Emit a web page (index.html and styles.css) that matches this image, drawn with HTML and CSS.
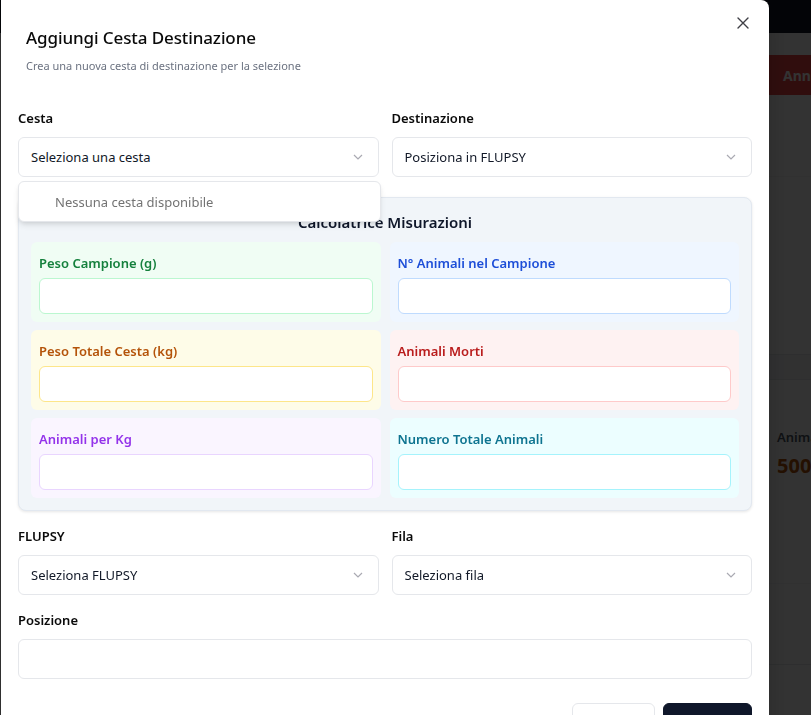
FILE: index.html
```html
<!DOCTYPE html>
<html lang="it">
<head>
<meta charset="utf-8">
<title>Aggiungi Cesta Destinazione</title>
<link rel="stylesheet" href="styles.css">
</head>
<body>
<div class="page">
  <header class="page-top"></header>
  <div class="page-col">
    <div class="toolbar"><span class="btn-danger">Annulla</span></div>
    <div class="blk blk-a"></div>
    <div class="blk blk-b"></div>
    <div class="blk blk-c"></div>
    <div class="stat">
      <div class="stat-label">Animali</div>
      <div class="stat-value">5000</div>
    </div>
    <div class="blk blk-d"></div>
    <div class="blk blk-e"></div>
  </div>
</div>
<div class="overlay"></div>

<div class="dialog" role="dialog">
  <button class="close" aria-label="Chiudi">
    <svg width="12" height="12" viewBox="0 0 12 12"><path d="M1 1L11 11M11 1L1 11" stroke="#3f3f46" stroke-width="1.4" stroke-linecap="round"/></svg>
  </button>
  <div class="dlg-head">
    <h2 class="dlg-title">Aggiungi Cesta Destinazione</h2>
    <p class="dlg-sub">Crea una nuova cesta di destinazione per la selezione</p>
  </div>

  <div class="two">
    <div class="field">
      <label class="lbl">Cesta</label>
      <div class="select-wrap">
        <div class="select"><span>Seleziona una cesta</span><svg class="chev" width="10" height="6" viewBox="0 0 10 6"><path d="M1 1l4 4 4-4" fill="none" stroke="#a1a1aa" stroke-width="1.2"/></svg></div>
        <div class="menu">Nessuna cesta disponibile</div>
      </div>
    </div>
    <div class="field">
      <label class="lbl">Destinazione</label>
      <div class="select"><span>Posiziona in FLUPSY</span><svg class="chev" width="10" height="6" viewBox="0 0 10 6"><path d="M1 1l4 4 4-4" fill="none" stroke="#a1a1aa" stroke-width="1.2"/></svg></div>
    </div>
  </div>

  <section class="calc">
    <h3 class="calc-title">Calcolatrice Misurazioni</h3>
    <div class="calc-grid">
      <div class="cell green"><div class="cell-lbl">Peso Campione (g)</div><div class="cell-in"></div></div>
      <div class="cell blue"><div class="cell-lbl">N° Animali nel Campione</div><div class="cell-in"></div></div>
      <div class="cell amber"><div class="cell-lbl">Peso Totale Cesta (kg)</div><div class="cell-in"></div></div>
      <div class="cell red"><div class="cell-lbl">Animali Morti</div><div class="cell-in"></div></div>
      <div class="cell purple"><div class="cell-lbl">Animali per Kg</div><div class="cell-in"></div></div>
      <div class="cell cyan"><div class="cell-lbl">Numero Totale Animali</div><div class="cell-in"></div></div>
    </div>
  </section>

  <div class="two two-b">
    <div class="field">
      <label class="lbl">FLUPSY</label>
      <div class="select"><span>Seleziona FLUPSY</span><svg class="chev" width="10" height="6" viewBox="0 0 10 6"><path d="M1 1l4 4 4-4" fill="none" stroke="#a1a1aa" stroke-width="1.2"/></svg></div>
    </div>
    <div class="field">
      <label class="lbl">Fila</label>
      <div class="select"><span>Seleziona fila</span><svg class="chev" width="10" height="6" viewBox="0 0 10 6"><path d="M1 1l4 4 4-4" fill="none" stroke="#a1a1aa" stroke-width="1.2"/></svg></div>
    </div>
  </div>

  <div class="field field-pos">
    <label class="lbl">Posizione</label>
    <div class="input"></div>
  </div>

  <div class="actions">
    <button class="btn btn-outline">Annulla</button>
    <button class="btn btn-dark">Aggiungi</button>
  </div>
</div>
</body>
</html>
```

FILE: styles.css
```css
* { box-sizing: border-box; }
html, body { margin: 0; height: 100%; overflow: hidden; }
body {
  font-family: "Noto Sans", "Open Sans", sans-serif;
  color: #0f172a;
  background: #ffffff;
}

/* background page */
.page { height: 100%; }
.page-top { height: 33px; background: #111827; }
.page-col { margin-left: 769px; overflow: hidden; }
.toolbar { padding-top: 22px; height: 62px; }
.btn-danger {
  display: flex; align-items: center;
  height: 40px; padding-left: 14px;
  background: #ef4444; color: #ffffff;
  font-weight: 700; font-size: 14px;
  white-space: nowrap;
}
.blk-a { height: 82px; border-bottom: 1px solid #f5f5f5; }
.blk-b { height: 178px; border-bottom: 1px solid #e5e7eb; }
.blk-c { height: 25px; background: #f3f4f6; border-bottom: 1px solid #e5e7eb; }
.stat { padding: 48px 0 0 8px; height: 204px; border-bottom: 1px solid #f3f4f6; }
.stat-label { font-size: 13px; font-weight: 600; color: #4b5563; white-space: nowrap; }
.stat-value { font-size: 20px; font-weight: 700; color: #b45309; margin-top: 6px; white-space: nowrap; }
.blk-d { height: 81px; border-bottom: 1px solid #e5e7eb; }

.overlay { position: fixed; inset: 0; background: rgba(0,0,0,0.8); }

/* dialog */
.dialog {
  position: fixed; left: 1px; top: 0; width: 768px; bottom: -60px;
  background: #ffffff;
  border-top-right-radius: 8px;
  padding: 24px 17px 0 17px;
  box-shadow: 0 10px 25px rgba(0,0,0,0.2);
}
.close {
  position: absolute; top: 16px; right: 19px;
  width: 14px; height: 14px; padding: 0; border: 0; background: none;
  display: flex; align-items: center; justify-content: center;
}
.dlg-head { padding-left: 8px; margin-bottom: 34px; }
.dlg-title { margin: 0; font-size: 17px; line-height: 28px; font-weight: 500; color: #0a0a0a; letter-spacing: -0.1px; }
.dlg-sub { margin: 6px 0 0; font-size: 11px; line-height: 16px; color: #6b7280; }

.two { display: grid; grid-template-columns: 1fr 1fr; gap: 13px; }
.field { display: flex; flex-direction: column; }
.lbl { font-size: 13px; line-height: 20px; font-weight: 600; color: #0a0a0a; margin-bottom: 9px; }
.select-wrap { position: relative; }
.select {
  height: 40px; border: 1px solid #e5e7eb; border-radius: 6px;
  display: flex; align-items: center; justify-content: space-between;
  padding: 0 15px 0 12px; font-size: 13px; color: #111827; background: #fff;
}
.chev { opacity: 0.9; }
.menu {
  position: absolute; left: 0; top: 44px; width: 363px; height: 41px;
  background: #ffffff; border: 1px solid #e5e7eb; border-radius: 6px;
  box-shadow: 0 4px 6px -1px rgba(0,0,0,0.1), 0 2px 4px -2px rgba(0,0,0,0.1);
  display: flex; align-items: center; padding-left: 36px;
  font-size: 13px; color: #737373; z-index: 5;
}

.calc {
  margin-top: 20px;
  background: #f1f5f9;
  border: 1px solid #e2e8f0; border-radius: 8px;
  box-shadow: 0 1px 3px rgba(0,0,0,0.1);
  padding: 13px 12px 12px;
}
.calc-title { margin: 0 0 9px; text-align: center; font-size: 15px; line-height: 22px; font-weight: 600; color: #0f172a; }
.calc-grid { display: grid; grid-template-columns: 1fr 1fr; gap: 8px 9px; }
.cell { border-radius: 6px; padding: 11px 8px 8px; }
.cell-lbl { font-size: 13px; line-height: 20px; font-weight: 600; margin-bottom: 5px; }
.cell-in { height: 36px; background: #fff; border: 1px solid; border-radius: 6px; }
.green { background: #f0fdf4; }
.green .cell-lbl { color: #15803d; }
.green .cell-in { border-color: #bbf7d0; }
.blue { background: #eff6ff; }
.blue .cell-lbl { color: #1d4ed8; }
.blue .cell-in { border-color: #bfdbfe; }
.amber { background: #fefce8; }
.amber .cell-lbl { color: #b45309; }
.amber .cell-in { border-color: #fde68a; }
.red { background: #fef2f2; }
.red .cell-lbl { color: #b91c1c; }
.red .cell-in { border-color: #fecaca; }
.purple { background: #faf5ff; }
.purple .cell-lbl { color: #9333ea; }
.purple .cell-in { border-color: #e9d5ff; }
.cyan { background: #ecfeff; }
.cyan .cell-lbl { color: #0e7490; }
.cyan .cell-in { border-color: #a5f3fc; }

.two-b { margin-top: 15px; }
.field-pos { margin-top: 15px; }
.input { height: 40px; border: 1px solid #e5e7eb; border-radius: 6px; }

.actions { display: flex; justify-content: flex-end; gap: 8px; margin-top: 24px; }
.btn { height: 40px; border-radius: 6px; font-family: inherit; font-size: 13px; font-weight: 500; padding: 0 16px; }
.btn-outline { width: 83px; background: #fff; border: 1px solid #e5e7eb; color: #0a0a0a; }
.btn-dark { width: 89px; background: #0f172a; border: 1px solid #0f172a; color: #fff; }
```
